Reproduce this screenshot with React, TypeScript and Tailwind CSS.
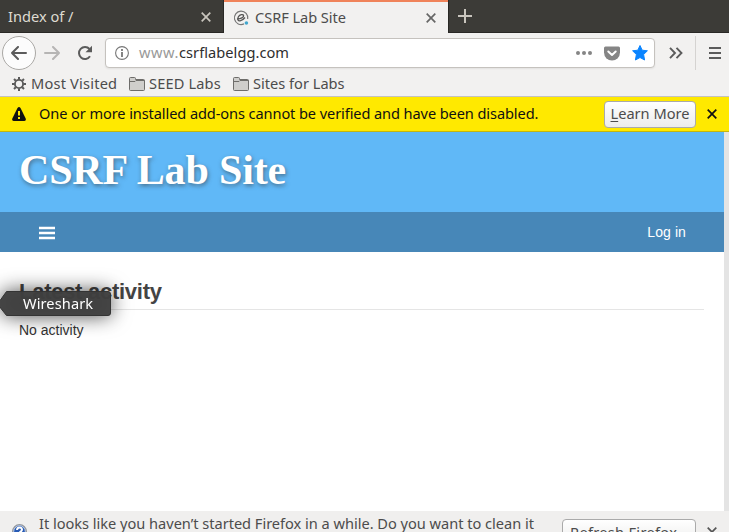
import React from 'react';

const ui = "font-['Noto_Sans',sans-serif] text-[14.6px] leading-5 whitespace-nowrap";

function Close({ className }: { className: string }) {
  return (
    <svg width="10" height="10" viewBox="0 0 10 10" className={`shrink-0 ${className}`} fill="none" stroke="currentColor" strokeWidth="1.7">
      <path d="M.7.7l8.6 8.6M9.3.7L.7 9.3" />
    </svg>
  );
}

function Folder() {
  return (
    <svg width="16" height="14" viewBox="0 0 16 14" className="shrink-0" fill="#cfcecb" stroke="#6e6d6a">
      <path d="M.5 12.5v-11q0-1 1-1h4q1 0 1 1v1h8q1 0 1 1v9q0 1-1 1h-13q-1 0-1-1z" />
      <path d="M1 4.5h5l1-1h8.5" fill="none" />
    </svg>
  );
}

function TabBar() {
  return (
    <div className="flex h-[33px] border-b border-[#292825] bg-[#3c3b37] text-[#dfdbd2]">
      <div className="flex w-[223px] items-center pl-2 pr-3 pt-px">
        <span className={`${ui} flex-1 pb-[2px]`}>Index of /</span>
        <Close className="text-[#c9c5bd]" />
      </div>
      <div className="h-8 w-px bg-[#292825]" />
      <div className="-mb-px flex h-[33px] w-[224px] items-center border-t-2 border-[#f0835a] bg-[#f2f1f0] pl-[9px] pr-3 text-[#4c4c4c]">
        <svg width="17" height="16" viewBox="0 0 17 16" className="mr-[5px] shrink-0" fill="none" stroke="#777" strokeWidth="1.2">
          <path d="M11 13.900A6.700 6.700 0 1 1 14.700 9" />
          <path d="M4.400 8.900c3.200.1 6.700-1.500 6.200-3.400-.5-1.700-3.900-1-5.200 1.300-1.500 2.600-.2 4.300 1.700 4 2-.3 3.700-1.700 4.900-3.300" stroke="#555" strokeWidth="1.300" />
          <circle cx="13.400" cy="13" r="1.800" fill="#42a6cd" stroke="none" />
        </svg>
        <span className={`${ui} flex-1 pb-[2px] tracking-[-0.05px]`}>CSRF Lab Site</span>
        <Close className="text-[#666]" />
      </div>
      <div className="h-8 w-px bg-[#292825]" />
      <svg width="14" height="14" viewBox="0 0 14 14" className="ml-[9px] mt-[9px]" stroke="#c9c5bd" strokeWidth="2">
        <path d="M0 7h14M7 0v14" />
      </svg>
    </div>
  );
}

function Navigation() {
  return (
    <div className="flex h-10 items-center pl-[2px]">
      <div className="flex size-[34px] shrink-0 items-center justify-center rounded-full border border-[#aaa8a5] bg-[#fcfcfc]">
        <svg width="16" height="14" viewBox="0 0 16 14" fill="none" stroke="#5b5b5b" strokeWidth="2" strokeLinecap="round" strokeLinejoin="round"><path d="M15 7H1M7 1L1 7l6 6" /></svg>
      </div>
      <svg width="16" height="14" viewBox="0 0 16 14" className="ml-2 shrink-0" fill="none" stroke="#b6b5b4" strokeWidth="2" strokeLinecap="round" strokeLinejoin="round"><path d="M1 7h14M9 1l6 6-6 6" /></svg>
      <svg width="16" height="16" viewBox="0 0 16 16" className="ml-[17px] shrink-0" fill="none" stroke="#5b5b5b" strokeWidth="2"><path d="M13 11.300A6 6 0 1 1 12.500 4" /><path d="M15 .8v6.500H8.500z" fill="#5b5b5b" stroke="none" /></svg>
      <div className="ml-3 flex h-[30px] w-[550px] shrink-0 items-center rounded-[4px] border border-[#c5c2be] bg-white pl-[9px] pr-[6px] shadow-[0_1px_2px_#0001]">
        <svg width="14" height="14" viewBox="0 0 14 14" fill="none" stroke="#777"><circle cx="7" cy="7" r="6.400" strokeWidth="1.100" /><path d="M7 6v5M7 3v2" strokeWidth="1.800" /></svg>
        <span className={`${ui} ml-[10px] flex-1 pb-[2px] text-[#2e2e2e]`}><span className="inline-block w-10 tracking-[0.55px] text-[#999]">www.</span><span className="tracking-[0.05px]">csrflabelgg.com</span></span>
        <svg width="16" height="4" viewBox="0 0 16 4" fill="#858585"><circle cx="2" cy="2" r="2" /><circle cx="8" cy="2" r="2" /><circle cx="14" cy="2" r="2" /></svg>
        <svg width="16" height="15" viewBox="0 0 16 15" className="ml-3"><path d="M1.500.5h13Q16 .5 16 2v4.500a8 8 0 0 1-16 0V2Q0 .5 1.500.5z" fill="#858585" /><path d="M4.300 5.500L8 9l3.700-3.500" fill="none" stroke="white" strokeWidth="2" strokeLinecap="round" strokeLinejoin="round" /></svg>
        <svg width="16" height="16" viewBox="0 0 16 16" className="ml-3"><path d="M8 .5l2.200 4.700 5.200.6-3.800 3.700 1 5.500L8 12.500 3.400 15l1-5.500L.6 5.800l5.200-.6z" fill="#0a84ff" stroke="#0a84ff" strokeLinejoin="round" /></svg>
      </div>
      <svg width="14" height="12" viewBox="0 0 14 12" className="ml-[14px] shrink-0" fill="none" stroke="#5b5b5b" strokeWidth="1.900"><path d="M1 .8L6 6l-5 5.200M7.500.8l5 5.200-5 5.200" /></svg>
      <div className="ml-3 h-[34px] w-px shrink-0 bg-[#d5d3d1]" />
      <svg width="12" height="12" viewBox="0 0 12 12" className="ml-[13px] shrink-0" stroke="#5b5b5b" strokeWidth="2"><path d="M0 1h12M0 6h12M0 11h12" /></svg>
    </div>
  );
}

function Bookmarks() {
  return (
    <div className={`${ui} flex h-6 items-center border-b border-[#c4c2be] pb-px pl-3 text-[#4c4c4c]`}>
      <svg width="14" height="14" viewBox="0 0 14 14" fill="none" stroke="#5b5b5b"><circle cx="7" cy="7" r="4.100" strokeWidth="1.900" /><path d="M7 0v2.500M7 11.500V14M0 7h2.500M11.500 7H14M2 2l1.800 1.800M10.200 10.200L12 12M2 12l1.800-1.800M10.200 3.800L12 2" strokeWidth="2" /></svg>
      <span className="ml-[5px] w-[86px] pb-[2px] tracking-[0.2px]">Most Visited</span>
      <span className="ml-3"><Folder /></span>
      <span className="ml-1 w-[72px] pb-[2px] tracking-[0.15px]">SEED Labs</span>
      <span className="ml-3"><Folder /></span>
      <span className="ml-1 pb-[2px]">Sites for Labs</span>
    </div>
  );
}

export default function App() {
  return (
    <div className="flex h-[532px] w-[729px] flex-col overflow-hidden bg-[#f2f1f0]">
      <TabBar />
      <Navigation />
      <Bookmarks />
      <div className={`${ui} flex h-[35px] shrink-0 items-center border-b border-[#c4b60e] bg-[#ffe900] pl-3 text-[#111]`}>
        <svg width="14" height="14" viewBox="0 0 14 14"><path d="M5.500 1Q7-.8 8.500 1l5.200 10.500Q14.300 14 12 14H2Q-.3 14 .3 11.500z" fill="#111" /><path d="M7 4v4.500M7 10v2" stroke="#ffe900" strokeWidth="2" /></svg>
        <span className="ml-[13px] flex-1 pb-[2px] tracking-[-0.1px]">One or more installed add-ons cannot be verified and have been disabled.</span>
        <button className="flex h-[27px] w-[92px] items-center justify-center rounded-[4px] border border-[#aaa] bg-linear-to-b from-white to-[#ececeb] pb-[2px] text-[#4c4c4c]"><span><span className="underline underline-offset-2">L</span>earn More</span></button>
        <Close className="ml-[11px] mr-3 text-[#111]" />
      </div>
      <div className="flex h-[379px] shrink-0 bg-[#e4e4e4]">
        <main className="relative w-[724px] overflow-hidden bg-white font-['Liberation_Sans',sans-serif]">
          <header className="h-20 bg-[#60b8f7] pl-[19px] pt-[13px]">
            <h1 className="font-['Liberation_Serif',serif] text-[42px] font-bold leading-[50px] tracking-[-0.17px] text-white [text-shadow:1px_2px_4px_#3338]">CSRF Lab Site</h1>
          </header>
          <nav className="flex h-10 items-center justify-between bg-[#4787b8] pl-[39px] pr-[38px] text-[14px] text-white">
            <svg width="16" height="14" viewBox="0 0 16 14" className="mt-px" stroke="white" strokeWidth="2.700"><path d="M0 2h16M0 7h16M0 12h16" /></svg>
            <span className="tracking-[0.1px]">Log in</span>
          </nav>
          <section className="ml-[19px] mr-5 pt-[25px]">
            <h2 className="h-[33px] border-b border-[#e5e5e5] text-[22px] font-bold leading-[30px] tracking-[-0.27px] text-[#444]">Latest activity</h2>
            <p className="mt-[10px] text-[14px] leading-5 text-[#333]">No activity</p>
          </section>
          <div className="absolute left-0 top-[159px] h-[25px] w-[111px] drop-shadow-[0_0_10px_#000b]">
            <svg width="111" height="25" viewBox="0 0 111 25" className="absolute" fill="#404040" fillOpacity=".96" stroke="#343434"><path d="M-1 11L6.500.5H108q2.500 0 2.500 2.500v19q0 2.500-2.500 2.500H6.500L-1 15z" /></svg>
            <span className={`${ui} relative left-[23px] top-[1px] tracking-[0.1px] text-white`}>Wireshark</span>
          </div>
        </main>
      </div>
      <footer className={`${ui} flex h-[21px] shrink-0 overflow-hidden bg-[#f0efee] pl-3 text-[#4c4c4c]`}>
        <svg width="15" height="15" viewBox="0 0 15 15" className="mt-[13px] shrink-0"><circle cx="7.500" cy="7.500" r="6.800" fill="#285bb5" stroke="#96999d" strokeWidth="1.300" /><circle cx="7.500" cy="7.500" r="5.800" fill="none" stroke="white" strokeWidth=".7" /><path d="M5 6q.2-2.500 2.500-2.500t2.500 2q0 1.500-2.500 3" stroke="white" strokeWidth="2" fill="none" /></svg>
        <span className="ml-3 mt-[2px] w-[523px] shrink-0 tracking-[-0.02px]">It looks like you haven’t started Firefox in a while. Do you want to clean it</span>
        <button className="mt-2 flex h-[27px] w-[134px] shrink-0 items-center rounded-[4px] border border-[#aaa] bg-linear-to-b from-white to-[#ececeb] pb-[2px] pl-[7px] tracking-[0.3px]">Refresh Firefox…</button>
        <Close className="ml-[11px] mt-4 text-[#555]" />
      </footer>
    </div>
  );
}
